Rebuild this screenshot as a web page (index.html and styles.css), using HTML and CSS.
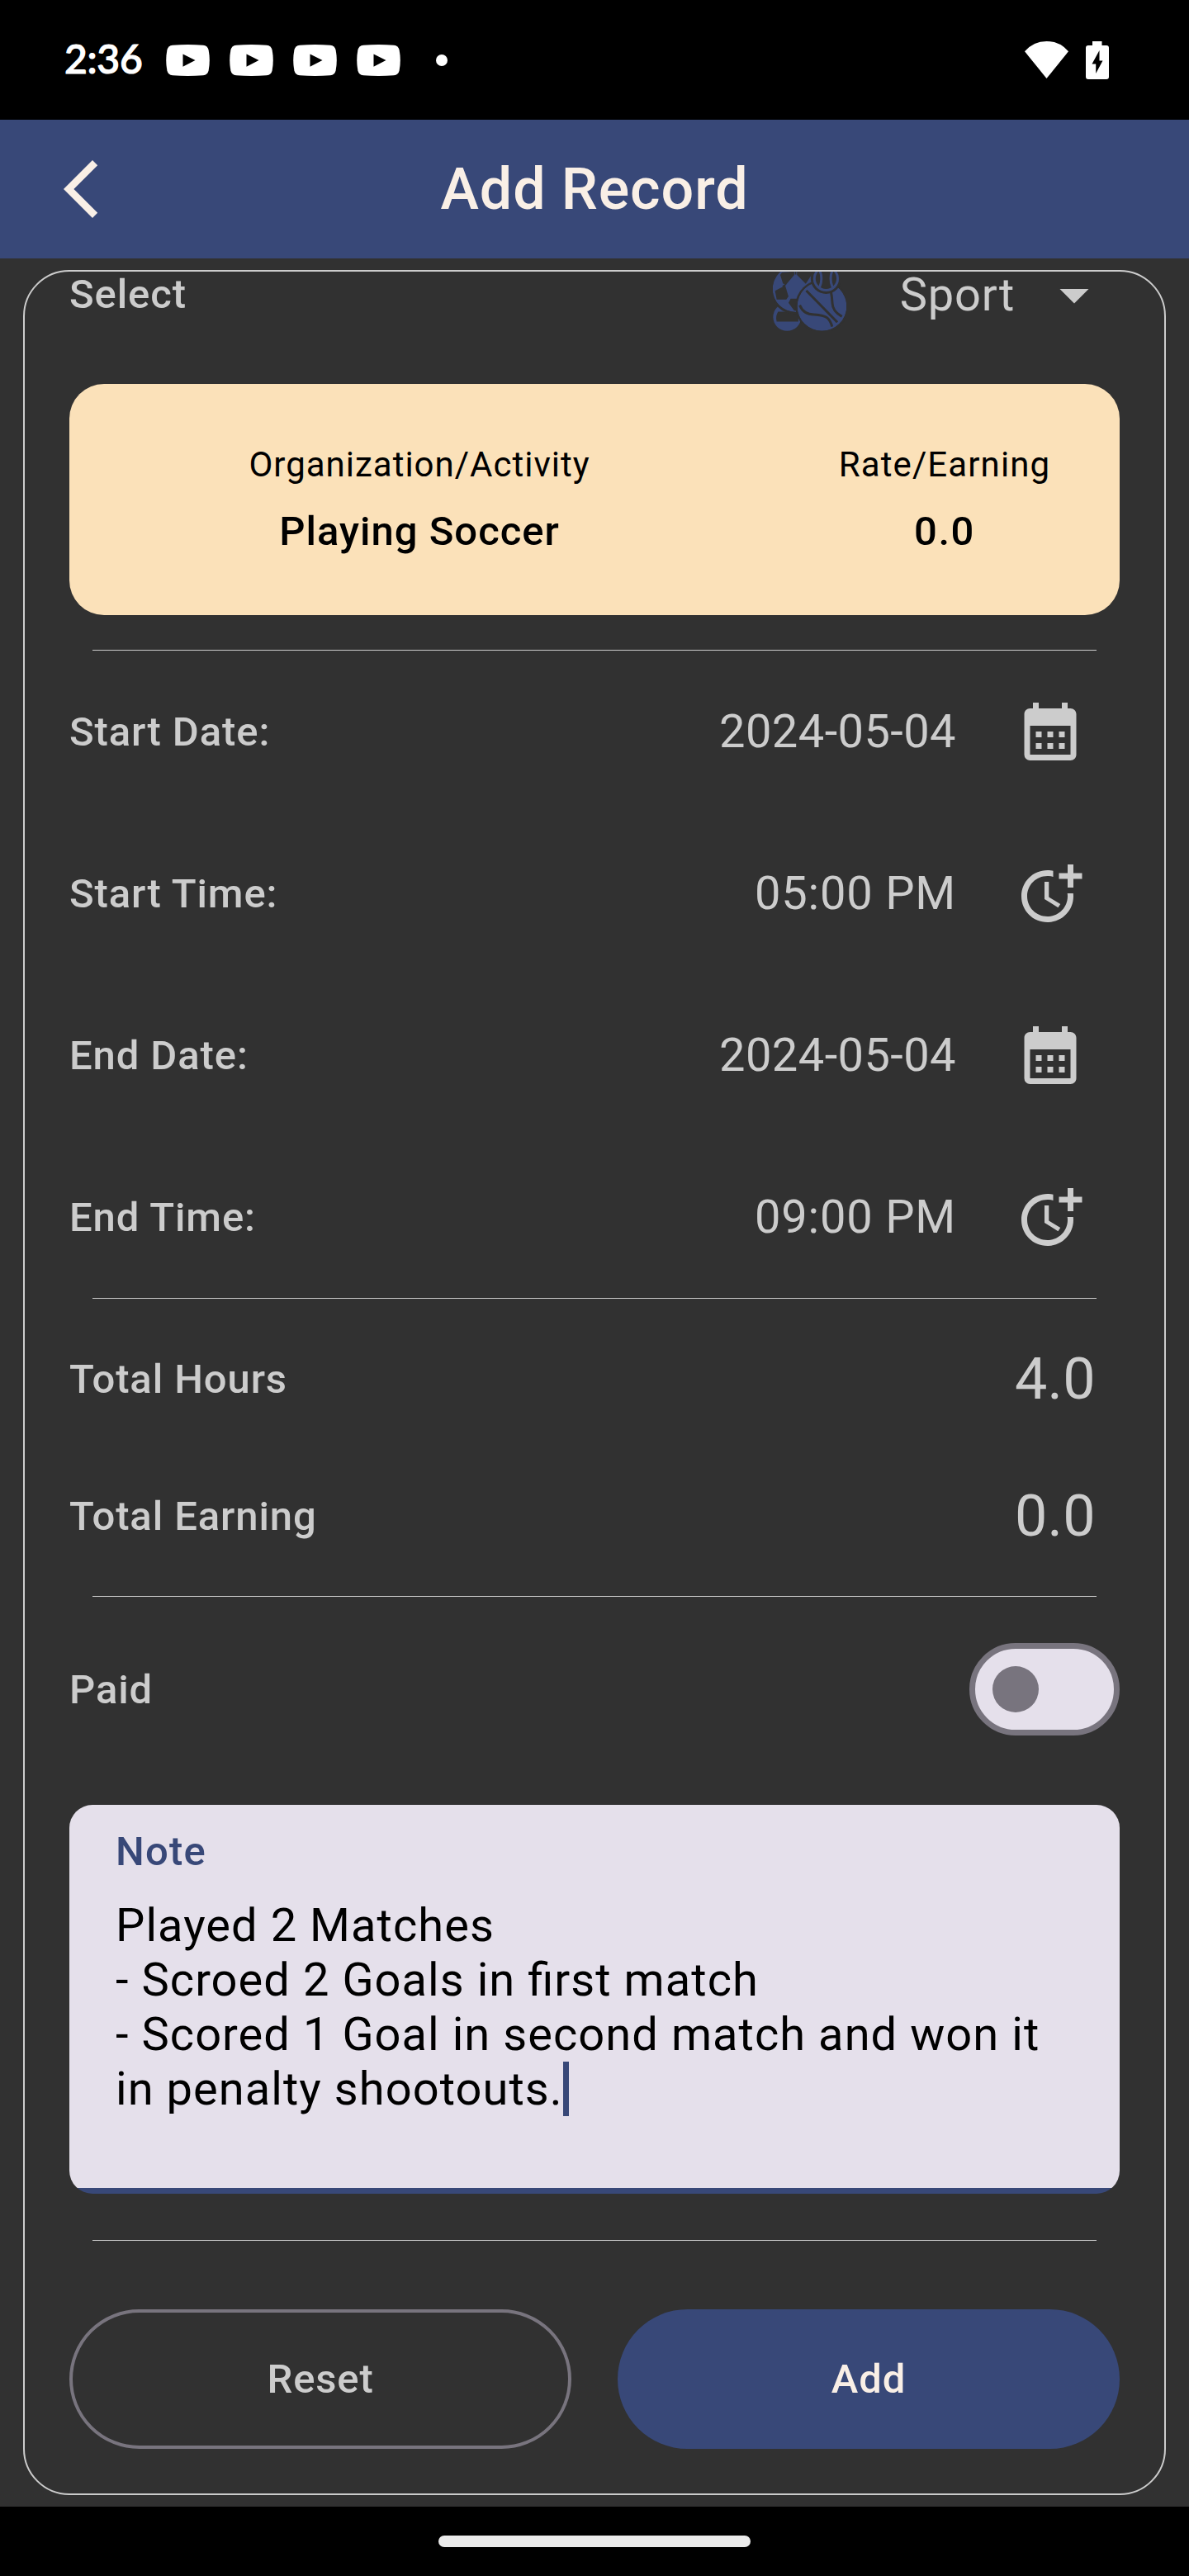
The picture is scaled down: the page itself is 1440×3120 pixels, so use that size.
FILE: index.html
```html
<!DOCTYPE html>
<html lang="en">
<head>
<meta charset="utf-8">
<title>Add Record</title>
<link rel="stylesheet" href="styles.css">
</head>
<body>
<svg class="defs" aria-hidden="true">
  <symbol id="video" viewBox="0 0 53 38">
    <path fill="#fff" d="M8 .8Q26.500-.8 45 .8Q50.500 1.300 51.600 6.500Q54 19 51.600 31.500Q50.500 36.700 45 37.200Q26.500 38.800 8 37.200Q2.500 36.700 1.400 31.500Q-1 19 1.400 6.500Q2.500 1.300 8 .8Z"/>
    <path fill="#000" d="M20.500 11.500L35.500 19L20.500 26.800Z"/>
  </symbol>
  <symbol id="calendar" viewBox="0 0 24 24">
    <path fill="currentColor" d="M19 4h-1V2h-2v2H8V2H6v2H5c-1.110 0-1.990.9-1.990 2L3 20a2 2 0 0 0 2 2h14c1.100 0 2-.9 2-2V6c0-1.100-.9-2-2-2zm0 16H5V10h14v10zM9 14H7v-2h2v2zm4 0h-2v-2h2v2zm4 0h-2v-2h2v2zm-8 4H7v-2h2v2zm4 0h-2v-2h2v2zm4 0h-2v-2h2v2z"/>
  </symbol>
  <symbol id="more-time" viewBox="0 0 24 24">
    <path fill="currentColor" d="M10 8v6l4.700 2.900.8-1.200-4-2.400V8z"/>
    <path fill="currentColor" d="M17.920 12c.05.33.08.66.08 1 0 3.900-3.100 7-7 7s-7-3.100-7-7 3.100-7 7-7c.7 0 1.370.1 2 .29V4.230c-.64-.15-1.310-.23-2-.23-5 0-9 4-9 9s4 9 9 9 9-4 9-9c0-.34-.02-.67-.06-1h-2.020z"/>
    <path fill="currentColor" d="M20 5V2h-2v3h-3v2h3v3h2V7h3V5z"/>
  </symbol>
</svg>

<div class="status-bar">
  <span class="clock">2:36</span>
  <div class="notifications">
    <svg class="video-icon"><use href="#video"/></svg>
    <svg class="video-icon"><use href="#video"/></svg>
    <svg class="video-icon"><use href="#video"/></svg>
    <svg class="video-icon"><use href="#video"/></svg>
  </div>
  <span class="more-dot"></span>
  <svg class="wifi-icon" viewBox="0 0 53 45"><path fill="#fff" d="M26.500 45L0 12.300Q10.500 0 26.500 0T53 12.300Z"/></svg>
  <svg class="battery-icon" viewBox="0 0 28 46"><path fill="#fff" fill-rule="evenodd" d="M8 0H19.500V5H25Q28 5 28 8V43Q28 46 25 46H3Q0 46 0 43V8Q0 5 3 5H8ZM16.500 11L7.500 27.500H12.200V39L20.500 23.500H16.500Z"/></svg>
</div>

<header class="app-bar">
  <svg class="back-icon" viewBox="0 0 24 24"><path fill="currentColor" d="M17.770 3.770L16 2 6 12l10 10 1.770-1.770L9.540 12z"/></svg>
  <h1 class="title">Add Record</h1>
</header>

<main class="screen">
  <section class="panel">
    <div class="select-row">
      <span class="label">Select</span>
      <svg class="sport-icon" viewBox="0 0 268 264">
        <defs>
          <clipPath id="soccer-clip"><circle cx="83" cy="111" r="84"/></clipPath>
          <clipPath id="basket-clip"><circle cx="179" cy="174" r="90"/></clipPath>
          <clipPath id="tennis-clip"><circle cx="194" cy="73" r="46"/></clipPath>
        </defs>
        <circle cx="52" cy="213" r="51" fill="#384878"/>
        <path fill="#313131" d="M19 194H45L62 198H93V230H14Q8 212 19 194Z"/>
        <circle cx="83" cy="111" r="92" fill="#313131"/>
        <g clip-path="url(#soccer-clip)">
          <circle cx="83" cy="111" r="84" fill="#384878"/>
          <path fill="#313131" d="M33 51L78 47V60L48 95L37 91L27 60ZM88 45L142 47V58L120 92L88 60ZM8 118L45 98L57 138L49 149H14ZM65 146H100V190H78L57 161Z"/>
          <path d="M83 58V45M48 93L36 102" stroke="#313131" stroke-width="5"/>
        </g>
        <circle cx="179" cy="174" r="97" fill="#313131"/>
        <g clip-path="url(#basket-clip)">
          <circle cx="179" cy="174" r="90" fill="#384878"/>
          <path fill="none" stroke="#313131" stroke-width="9" d="M122 117L235 232M98 170Q112 204 150 204Q186 206 198 216Q210 226 216 248M211 115Q216 140 217 163Q218 193 252 211"/>
        </g>
        <circle cx="194" cy="73" r="56" fill="#313131"/>
        <circle cx="194" cy="73" r="47" fill="#384878"/>
        <circle cx="194" cy="73" r="38" fill="#313131"/>
        <g clip-path="url(#tennis-clip)" fill="none" stroke="#384878" stroke-width="9">
          <ellipse cx="160" cy="73" rx="17" ry="38"/><ellipse cx="228" cy="73" rx="17" ry="38"/>
        </g>
      </svg>
      <span class="value sport">Sport</span>
      <svg class="arrow-icon" viewBox="0 0 24 24"><path fill="currentColor" d="M7 10l5 5 5-5z"/></svg>
    </div>

    <div class="activity">
      <div class="activity-main"><span class="caption">Organization/Activity</span><strong class="activity-value">Playing Soccer</strong></div>
      <div class="activity-rate"><span class="caption rate">Rate/Earning</span><strong class="activity-value number">0.0</strong></div>
    </div>

    <hr class="divider first">
    <div class="row"><span class="label">Start Date:</span><span class="value">2024-05-04</span><svg class="row-icon"><use href="#calendar"/></svg></div>
    <div class="row"><span class="label">Start Time:</span><span class="value time">05:00 PM</span><svg class="row-icon"><use href="#more-time"/></svg></div>
    <div class="row"><span class="label">End Date:</span><span class="value">2024-05-04</span><svg class="row-icon"><use href="#calendar"/></svg></div>
    <div class="row"><span class="label">End Time:</span><span class="value time">09:00 PM</span><svg class="row-icon"><use href="#more-time"/></svg></div>
    <hr class="divider">
    <div class="totals">
      <div class="total-row"><span class="label">Total Hours</span><span class="total">4.0</span></div>
      <div class="total-row"><span class="label">Total Earning</span><span class="total">0.0</span></div>
    </div>
    <hr class="divider">
    <div class="paid-row"><span class="label">Paid</span><span class="switch"><span class="thumb"></span></span></div>

    <div class="note">
      <span class="note-label">Note</span>
      <div class="note-text">Played 2 Matches<br>- Scroed 2 Goals in first match<br>- Scored 1 Goal in second match and won it<br>in penalty shootouts.<span class="cursor"></span></div>
    </div>
    <hr class="divider">
    <div class="actions">
      <button class="button outlined">Reset</button>
      <button class="button filled">Add</button>
    </div>
  </section>
</main>
<div class="nav-bar"><span class="handle"></span></div>
</body>
</html>
```
FILE: styles.css
```css
* { box-sizing: border-box; }

body {
  margin: 0;
  width: 1440px;
  height: 3120px;
  display: flex;
  flex-direction: column;
  background: #313131;
  color: #cccccc;
  font-family: Roboto, "Liberation Sans", sans-serif;
}

svg { display: block; flex: none; }
.defs { position: absolute; width: 0; height: 0; }

/* Status bar */
.status-bar {
  flex: none;
  height: 145px;
  padding: 0 97px 0 78px;
  display: flex;
  align-items: center;
  background: #000;
  color: #fff;
}
.clock {
  width: 123px;
  padding-bottom: 4px;
  font: 500 48px/58px Lato, sans-serif;
  letter-spacing: -0.3px;
  -webkit-text-stroke: 1.2px #fff;
}
.notifications { display: flex; gap: 24px; }
.video-icon { width: 53px; height: 38px; }
.more-dot { width: 14px; height: 14px; margin-left: 43px; border-radius: 50%; background: #fff; }
.wifi-icon { width: 53px; height: 45px; margin-left: auto; }
.battery-icon { width: 28px; height: 46px; margin-left: 21px; }

/* App bar */
.app-bar {
  flex: none;
  height: 168px;
  padding: 0 56px;
  display: grid;
  grid-template-columns: 84px 1fr 84px;
  align-items: center;
  background: #384878;
  color: #f9efe6;
}
.back-icon { width: 84px; height: 84px; }
.title {
  margin: 0;
  text-align: center;
  font-size: 70px;
  font-weight: 500;
  line-height: 82px;
  letter-spacing: 0.9px;
}

/* Form panel */
.screen { flex: none; height: 2723px; padding: 14px 28px; }
.panel {
  height: 2695px;
  padding: 0 54px;
  border: 2px solid #cccccc;
  border-radius: 56px;
  overflow: hidden;
}
.label {
  margin-right: auto;
  font-size: 49px;
  font-weight: 500;
  line-height: 57px;
  letter-spacing: 0.9px;
}
.value { font-size: 56px; line-height: 66px; letter-spacing: 0.42px; }
.value.time { letter-spacing: 0.8px; }
.value.sport { line-height: 54px; letter-spacing: 0.8px; }

.select-row {
  height: 56px;
  margin-bottom: 80px;
  padding-right: 13px;
  display: flex;
  align-items: center;
}
.select-row .label { line-height: 54px; padding-bottom: 1px; }
.sport-icon { width: 89px; height: 88px; margin-right: 65px; }
.arrow-icon { width: 84px; height: 84px; margin-left: 30px; }

.activity {
  height: 280px;
  display: grid;
  grid-template-columns: 2fr 1fr;
  border-radius: 42px;
  background: #fbe1b9;
  color: #000;
}
.activity-main, .activity-rate {
  padding-top: 73px;
  display: flex;
  flex-direction: column;
  align-items: center;
  gap: 28px;
}
.caption { font-size: 42px; line-height: 49px; letter-spacing: 1px; }
.caption.rate { letter-spacing: 1.1px; }
.activity-value { font-size: 49px; font-weight: 500; line-height: 57px; letter-spacing: 1px; }
.activity-value.number { letter-spacing: 1.5px; }

.divider { height: 1px; margin: 0 28px; border: 0; background: #cccccc; }
.divider.first { margin-top: 42px; }

.row { height: 196px; padding-right: 42px; display: flex; align-items: center; }
.row-icon { width: 84px; height: 84px; margin-left: 72px; }

.totals { padding: 14px 0; }
.total-row { height: 166px; padding-right: 29px; display: flex; align-items: center; }
.total { font-size: 70px; line-height: 82px; letter-spacing: 0.3px; }

.paid-row { height: 224px; display: flex; align-items: center; }
.switch {
  width: 182px;
  height: 112px;
  padding: 0 21px;
  display: flex;
  align-items: center;
  border: 7px solid #78747e;
  border-radius: 56px;
  background: #e5e0eb;
}
.thumb { width: 56px; height: 56px; border-radius: 50%; background: #78747e; }

/* Note field */
.note {
  height: 471px;
  margin: 28px 0 56px;
  padding: 28px 56px 0;
  border-radius: 28px;
  background: linear-gradient(#384878, #384878) bottom / 100% 7px no-repeat #e5e0eb;
  color: #000;
}
.note-label {
  display: block;
  color: #384878;
  font-size: 49px;
  font-weight: 500;
  line-height: 57px;
  letter-spacing: 1.2px;
}
.note-text {
  margin-top: 28px;
  font-size: 56px;
  line-height: 66px;
  letter-spacing: 1.05px;
  white-space: nowrap;
  font-feature-settings: "liga" 1;
}
.cursor {
  display: inline-block;
  width: 7px;
  height: 66px;
  vertical-align: top;
  background: #384878;
}

/* Buttons */
.actions { margin-top: 83px; display: grid; grid-template-columns: 1fr 1fr; gap: 56px; }
.button {
  height: 169px;
  padding: 0;
  border: 0;
  border-radius: 85px;
  font-family: inherit;
  font-size: 49px;
  font-weight: 500;
  line-height: 57px;
  letter-spacing: 0.85px;
}
.button.outlined { border: 4px solid #78747e; background: transparent; color: #cccccc; }
.button.filled { background: #384878; color: #f9efe6; }

/* Gesture navigation */
.nav-bar { flex: none; height: 84px; padding-top: 35px; background: #000; }
.handle { display: block; width: 378px; height: 14px; margin: 0 auto; border-radius: 7px; background: #ebebeb; }
```
